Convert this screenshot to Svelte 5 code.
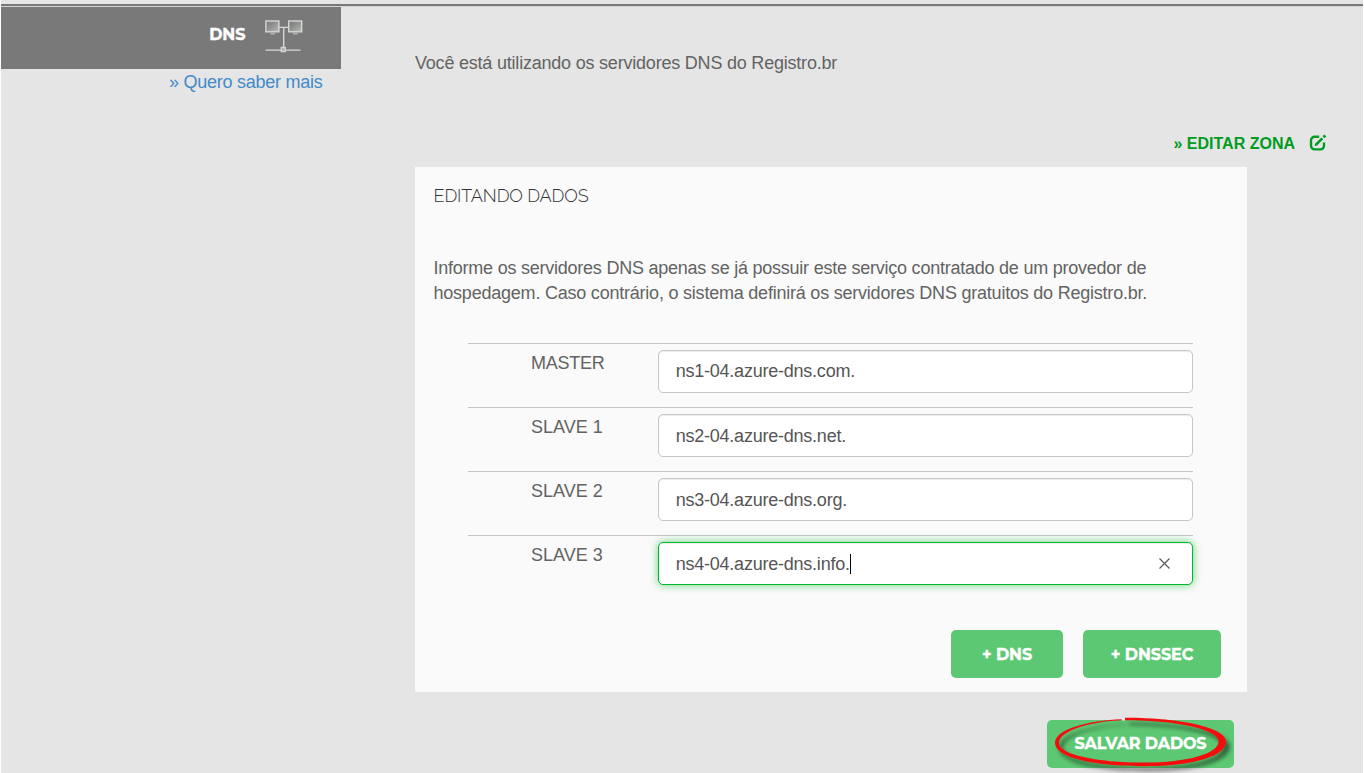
<script>
  let servers = $state([
    { label: 'MASTER', value: 'ns1-04.azure-dns.com.' },
    { label: 'SLAVE 1', value: 'ns2-04.azure-dns.net.' },
    { label: 'SLAVE 2', value: 'ns3-04.azure-dns.org.' },
    { label: 'SLAVE 3', value: 'ns4-04.azure-dns.info.', active: true }
  ]);
</script>

<div class="page">
  <div class="rule"></div>
  <div class="layout">
    <aside>
      <div class="tab">
        <span class="tab-title">DNS</span>
        <svg class="network" width="40" height="36" viewBox="0 0 40 36" fill="none">
          <defs>
            <linearGradient id="screen" x1="0" y1="0" x2="1" y2="1">
              <stop offset="0" stop-color="#777" />
              <stop offset=".5" stop-color="#939593" />
              <stop offset="1" stop-color="#bbb" />
            </linearGradient>
          </defs>
          <g stroke="#d5d7d5" stroke-width="1.4">
            <rect x="1.9" y="4" width="13" height="10.8" fill="url(#screen)" />
            <rect x="24.7" y="4" width="13" height="10.8" fill="url(#screen)" />
            <path d="M15 10.4h9.5M19.7 10.4v19.6M1.5 33.1h35" />
            <rect x="17.3" y="30.5" width="4" height="4" fill="#aaa" />
          </g>
          <path d="M6.5 16.6h4.5M29 16.6h4.5" stroke="#b2b4b2" stroke-width="1.6" />
        </svg>
      </div>
      <a class="more" href="#mais">» Quero saber mais</a>
    </aside>

    <main>
      <p class="status">Você está utilizando os servidores DNS do Registro.br</p>
      <a class="edit" href="#zona">
        <span>» EDITAR ZONA</span>
        <svg width="18" height="18" viewBox="0 0 18 18" fill="none" stroke="#009c22">
          <path d="M10.2 2.8H5.6A3.6 3.6 0 0 0 2 6.4v5.4a3.6 3.6 0 0 0 3.6 3.6h5.8a3.6 3.6 0 0 0 3.6-3.6V8.4" stroke-width="2.4" />
          <path d="M7.3 10.4l6-6" stroke-width="2.6" />
          <path d="M14.5 3.2l1.8-1.8" stroke-width="2.8" />
          <path d="M5.7 12.1l.6-3 2.4 2.4z" fill="#009c22" stroke="none" />
        </svg>
      </a>

      <section>
        <h2>EDITANDO DADOS</h2>
        <p class="info">Informe os servidores DNS apenas se já possuir este serviço contratado de um provedor de<br /><span>hospedagem. Caso contrário, o sistema definirá os servidores DNS gratuitos do Registro.br.</span></p>
        <div class="rows">
          {#each servers as server, i}
            <div class="row">
              <span class="label" class:tight={i === 0}>{server.label}</span>
              <div class="field" class:lower={i > 0} class:active={server.active}>
                <span>{server.value}</span>
                {#if server.active}
                  <i class="caret"></i>
                  <svg class="clear" width="11" height="11" viewBox="0 0 11 11"><path d="M.5.5l10 10M10.5.5l-10 10" stroke="#555" stroke-width="1.1" /></svg>
                {/if}
              </div>
            </div>
          {/each}
        </div>
        <div class="actions">
          <button class="dns">+ DNS</button>
          <button class="dnssec">+ DNSSEC</button>
        </div>
      </section>

      <div class="save-wrap">
        <button class="save">SALVAR DADOS</button>
        <svg class="ring" width="200" height="65" viewBox="0 0 200 65">
          <defs>
            <filter id="shade" x="-10%" y="-20%" width="120%" height="150%">
              <feDropShadow dx="4" dy="5" stdDeviation="2.2" flood-color="#000" flood-opacity=".5" />
            </filter>
          </defs>
          <path filter="url(#shade)" fill="#f40b0b" d="M82 9.2C48 10.5 15 19 15 33C15 47 51 56.2 104 56.2C154 56.2 186 46 186 31.5C186 18 142 7.8 85 7.8V10.3C139 10.3 178.5 20 178.5 31.5C178.5 43.5 148 52.6 104 52.6C56 52.6 19 44.5 19 33C19 20.5 52 11 82 10.2Z" />
          <path d="M81.8 8h3.2v2.4h-3.2z" fill="#f1f1f1" />
        </svg>
      </div>
    </main>
  </div>
</div>

<style>
  :global(body) { margin: 0; background: #fff; overflow: hidden; }
  * { box-sizing: border-box; }
  .page {
    height: 773px;
    margin: 0 1px;
    padding-top: 4px;
    overflow: hidden;
    background: #e5e5e5;
    color: #636363;
    font: 18px/25px "Liberation Sans", Arial, sans-serif;
  }
  .rule { height: 3px; background: #787878; border-bottom: 1px solid #d5d5d5; }
  .layout { display: flex; }
  aside { width: 340px; flex: none; text-align: right; }
  .tab { height: 62px; background: #797979; display: flex; justify-content: flex-end; padding: 10px 37px 0 0; }
  .tab-title { color: #fff; font: 700 16px/36px Montserrat, Inter, sans-serif; -webkit-text-stroke: .35px #fff; margin-right: 18.5px; }
  .more { display: block; padding: 1px 18.5px 0 0; color: #428bca; text-decoration: none; letter-spacing: -.26px; }
  main { width: 948px; margin-left: 74px; flex: none; }
  p, h2 { margin: 0; }
  .status { padding-top: 44px; letter-spacing: -.21px; white-space: nowrap; }
  .edit {
    display: flex; justify-content: flex-end; align-items: center; gap: 14px;
    height: 25px; margin-top: 55px; padding-right: 36px;
    color: #009c22; font-size: 16px; font-weight: bold; text-decoration: none;
  }
  .edit svg { margin-bottom: 2px; }
  section { width: 832px; height: 525px; margin-top: 11px; padding: 16px 26px 0 18.5px; background: #fafafa; }
  h2 { font: 300 18px/25px Raleway, Lato, sans-serif; color: #333; letter-spacing: -.12px; }
  .info { margin-top: 48px; letter-spacing: -.235px; white-space: nowrap; }
  .info span { letter-spacing: -.22px; }
  .rows { width: 725px; margin: 37px 0 0 34.5px; }
  .row { display: flex; height: 64px; border-top: 1px solid #c6c6c6; padding-top: 6px; }
  .label { width: 190px; padding: 1px 0 0 63px; white-space: nowrap; }
  .tight { letter-spacing: -.25px; }
  .field {
    display: flex; align-items: center; width: 535px; height: 43px; padding: 0 22px 0 16.7px;
    background: #fff; border: 1px solid #c6c6c6; border-radius: 5px; letter-spacing: -.23px;
    box-shadow: inset 0 1px 1px rgba(0,0,0,.075); color: #555;
  }
  .lower { padding-top: 1px; }
  .active { border-color: #00b82b; box-shadow: inset 0 1px 1px rgba(0,0,0,.075), 0 0 8px rgba(0,184,43,.6); }
  .caret { width: 1px; height: 20px; background: #000; }
  .clear { margin: 0 0 1px auto; }
  .actions { display: flex; justify-content: flex-end; gap: 20px; margin-top: 31px; }
  button {
    height: 48px; padding: 2px 0 0; border: 0; border-radius: 5px; background: #5dc873;
    color: #fff; font: 700 16px/46px Montserrat, Inter, sans-serif; letter-spacing: -.07px; white-space: nowrap;
    -webkit-text-stroke: .35px #fff;
  }
  .dns { width: 112px; }
  .dnssec { width: 138px; }
  .save-wrap { position: relative; width: 187px; height: 48px; margin: 28px 0 0 632px; }
  .save { width: 187px; padding: 0; line-height: 48px; letter-spacing: -.13px; }
  .ring { position: absolute; left: -7px; top: -10px; overflow: visible; pointer-events: none; }
</style>
